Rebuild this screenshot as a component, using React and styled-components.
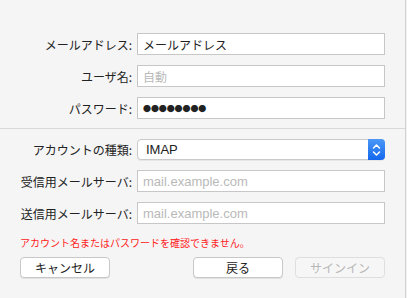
import React from 'react';
import styled, { createGlobalStyle } from 'styled-components';

const GlobalStyle = createGlobalStyle`
  html, body {
    margin: 0;
    padding: 0;
    background: #f0f0f0;
  }
  body {
    font-family: "Noto Sans CJK JP", "Liberation Sans", sans-serif;
    -webkit-font-smoothing: antialiased;
  }
`

const App = () => {
  return (
    <>
      <GlobalStyle />
      <Sheet>
        <Section $top={33} $bottom={9}>
          <Label>メールアドレス:</Label>
          <Field defaultValue="メールアドレス" />
          <Label>ユーザ名:</Label>
          <Field placeholder="自動" />
          <Label>パスワード:</Label>
          <Field $dots defaultValue="●●●●●●●●" readOnly />
        </Section>
        <Divider />
        <Section $top={10} $bottom={0}>
          <Label>アカウントの種類:</Label>
          <Select>
            <span>IMAP</span>
            <Stepper>
              <svg width="9" height="14" viewBox="0 0 9 14">
                <path d="M1.5 5 L4.5 2 L7.5 5 M1.5 9 L4.5 12 L7.5 9" fill="none" stroke="#fff" strokeWidth="1.5" strokeLinecap="round" strokeLinejoin="round" />
              </svg>
            </Stepper>
          </Select>
          <Label>受信用メールサーバ:</Label>
          <Field $latin placeholder="mail.example.com" />
          <Label>送信用メールサーバ:</Label>
          <Field $latin placeholder="mail.example.com" />
        </Section>
        <ErrorText>アカウント名またはパスワードを確認できません。</ErrorText>
        <Footer>
          <Button>キャンセル</Button>
          <Spacer />
          <Button>戻る</Button>
          <Button disabled>サインイン</Button>
        </Footer>
      </Sheet>
    </>
  );
}

const Sheet = styled.div`
  width: 405px;
  height: 298px;
  background: #f5f5f5;
  border-right: 1px solid #d2d2d2;
  box-sizing: content-box;
`
const Section = styled.div`
  display: grid;
  grid-template-columns: 132px 248px;
  column-gap: 5px;
  row-gap: 10px;
  align-items: center;
  padding-top: ${p => p.$top}px;
  padding-bottom: ${p => p.$bottom}px;
`
const Label = styled.div`
  text-align: right;
  font-size: 12px;
  color: #222;
  white-space: nowrap;
  line-height: 21px;
`
const Field = styled.input`
  box-sizing: border-box;
  width: 248px;
  height: 22px;
  margin: 0;
  padding: 0 0 0 5px;
  border: 1px solid #c7c7c7;
  border-radius: 0;
  background: #fff;
  outline: none;
  color: #222;
  font-family: ${p => p.$latin ? '"Liberation Sans", "Noto Sans CJK JP", sans-serif' : '"Noto Sans CJK JP", sans-serif'};
  font-size: ${p => p.$dots ? '8px' : p.$latin ? '13px' : '12px'};
  letter-spacing: ${p => p.$dots ? '-0.1px' : '0'};
  &::placeholder {
    color: #b9b9b9;
  }
`
const Divider = styled.div`
  height: 1px;
  background: #d9d9d9;
`
const Select = styled.div`
  box-sizing: border-box;
  width: 248px;
  height: 21px;
  display: flex;
  align-items: center;
  justify-content: space-between;
  background: #fff;
  border: 1px solid #cacaca;
  border-radius: 4px;
  box-shadow: 0 1px 0 rgba(0, 0, 0, 0.06);
  span {
    padding-left: 8px;
    font-family: "Liberation Sans", sans-serif;
    font-size: 13px;
    color: #222;
  }
`
const Stepper = styled.div`
  width: 17px;
  height: 21px;
  margin: -1px -1px -1px 0;
  border-radius: 0 4px 4px 0;
  background: linear-gradient(#4b98f7, #1467ee);
  display: flex;
  align-items: center;
  justify-content: center;
`
const ErrorText = styled.p`
  margin: 12px 0 0 20px;
  font-size: 10px;
  line-height: 14px;
  color: #ff1a1a;
  white-space: nowrap;
`
const Footer = styled.div`
  display: flex;
  align-items: center;
  gap: 12px;
  padding: 7px 0 0 20px;
  width: 365px;
`
const Spacer = styled.div`
  flex: 1;
`
const Button = styled.button`
  box-sizing: border-box;
  width: 90px;
  height: 21px;
  margin: 0;
  padding: 0;
  border: 1px solid ${p => p.disabled ? '#dedede' : '#c8c8c8'};
  border-radius: 4px;
  background: ${p => p.disabled ? '#f6f6f6' : '#fff'};
  box-shadow: ${p => p.disabled ? 'none' : '0 1px 0 rgba(0, 0, 0, 0.08)'};
  font-family: "Noto Sans CJK JP", sans-serif;
  font-size: 12px;
  color: ${p => p.disabled ? '#b6b6b6' : '#222'};
`

export default App;
